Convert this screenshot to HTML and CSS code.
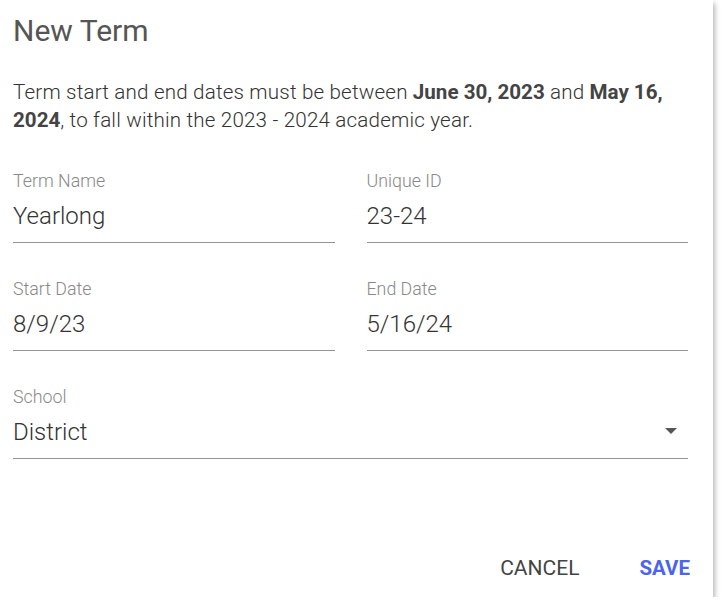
FILE: index.html
```html
<!DOCTYPE html>
<html>
<head>
<meta charset="utf-8">
<link rel="stylesheet" href="styles.css">
</head>
<body>
<div class="dialog">
  <h1 class="title">New Term</h1>
  <p class="desc">Term start and end dates must be between <b>June 30, 2023</b> and <b>May 16, 2024</b>, to fall within the 2023 - 2024 academic year.</p>
  <div class="grid">
    <div class="field">
      <label class="label">Term Name</label>
      <div class="value">Yearlong</div>
    </div>
    <div class="field">
      <label class="label">Unique ID</label>
      <div class="value">23-24</div>
    </div>
    <div class="field">
      <label class="label">Start Date</label>
      <div class="value">8/9/23</div>
    </div>
    <div class="field">
      <label class="label">End Date</label>
      <div class="value">5/16/24</div>
    </div>
    <div class="field full">
      <label class="label">School</label>
      <div class="value select">District
        <svg class="arrow" width="12" height="6" viewBox="0 0 12 6"><path d="M0 0h12L6 6z" fill="#555"/></svg>
      </div>
    </div>
  </div>
  <div class="actions">
    <button class="btn">CANCEL</button>
    <button class="btn primary">SAVE</button>
  </div>
</div>
</body>
</html>
```
FILE: styles.css
```css
html, body { margin: 0; padding: 0; background: #fff; }
body { font-family: Roboto, "Noto Sans", sans-serif; }
.dialog {
  width: 713px;
  height: 597px;
  box-sizing: border-box;
  padding: 0 25px 0 13px;
  background: #fff;
  box-shadow: 2px 3px 5px rgba(0,0,0,0.28);
  display: flex;
  flex-direction: column;
}
.title {
  margin: 0;
  padding-top: 11px;
  font-size: 30px;
  font-weight: 400;
  line-height: 40px;
  color: #555;
}
.desc {
  margin: 27px 0 0;
  font-size: 20.6px;
  font-weight: 300;
  letter-spacing: 0.18px;
  line-height: 28px;
  color: #333;
}
.desc b { font-weight: 700; color: #444; letter-spacing: 0; }
.grid {
  margin-top: 36px;
  display: grid;
  grid-template-columns: 1fr 1fr;
  column-gap: 32px;
  row-gap: 35px;
}
.field {
  border-bottom: 1px solid #949494;
  padding-bottom: 11px;
}
.field.full { grid-column: 1 / 3; }
.label {
  display: block;
  font-size: 17.8px;
  font-weight: 300;
  line-height: 22px;
  color: #888;
}
.value {
  margin-top: 9px;
  font-size: 24px;
  font-weight: 300;
  line-height: 30px;
  color: #333;
}
.select { display: flex; justify-content: space-between; align-items: center; }
.arrow { margin-right: 11px; margin-top: -2px; }
.actions {
  margin-top: auto;
  margin-bottom: 17px;
  margin-right: -2px;
  display: flex;
  justify-content: flex-end;
  gap: 60px;
}
.btn {
  background: none;
  border: 0;
  padding: 0;
  font-family: inherit;
  font-size: 21px;
  line-height: 24px;
  color: #444;
  font-weight: 400;
}
.btn.primary { color: #4a64f0; font-weight: 700; font-size: 20.5px; }
```
